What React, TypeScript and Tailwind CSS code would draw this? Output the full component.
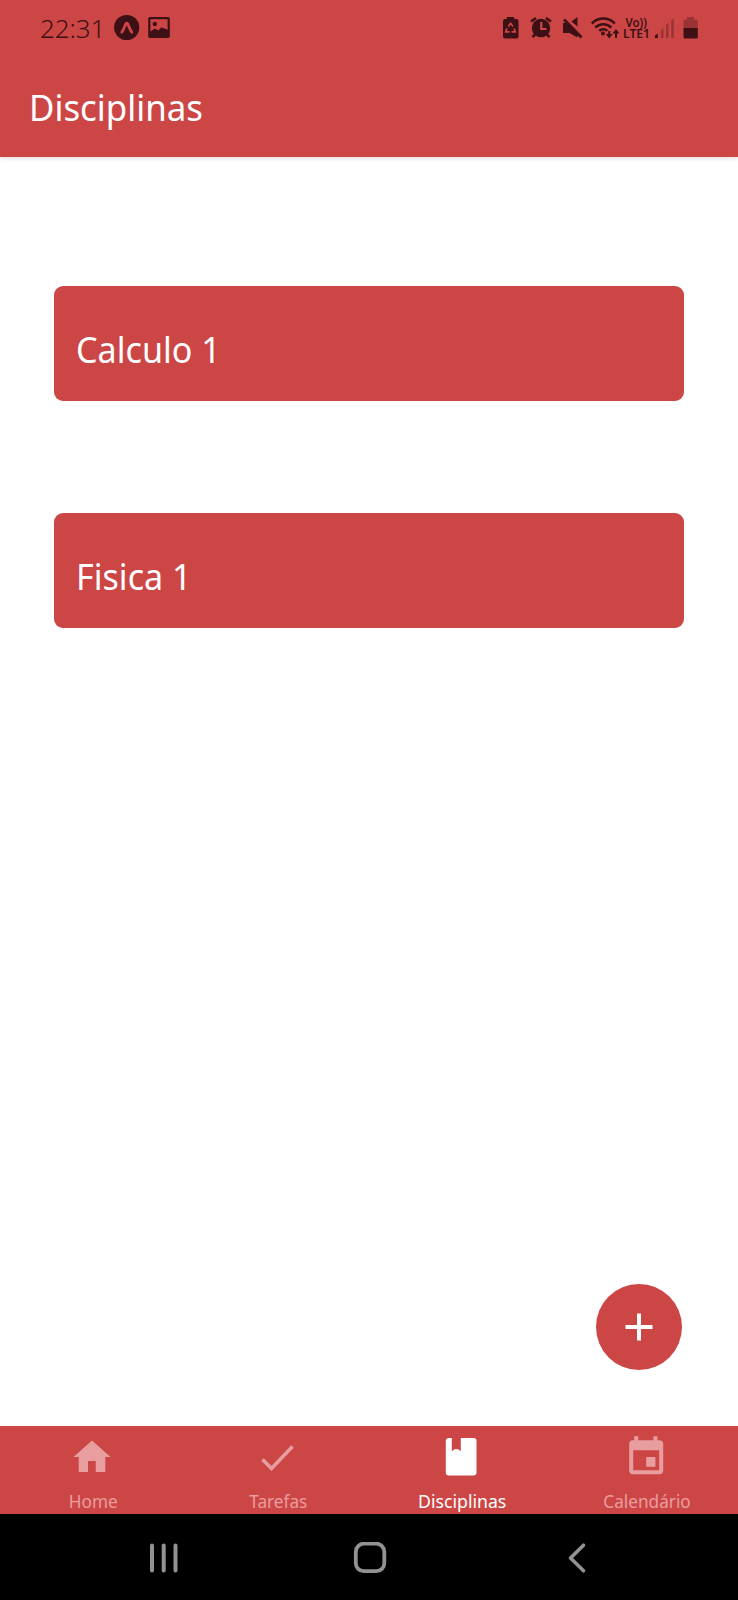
import type { ReactNode } from "react";

function StatusBar() {
  return (
    <div className="flex h-[56px] justify-between pl-10 pr-9 text-[#3d1015]">
      <div className="flex">
        <span className="mt-[9px] w-[66px] whitespace-nowrap text-[26px] font-light leading-[38px] tracking-[-0.1px]">22:31</span>
        <svg className="ml-[8px] mt-[14px]" width="57" height="28" viewBox="114 14 57 28" fill="currentColor">
          <circle cx="126.7" cy="27.5" r="12.6" />
          <path d="M121.8 32.200c2-2.600 3-6.500 4.100-8.400.5-.8 1.200-.8 1.700 0 1.100 1.900 2.200 5.800 4.200 8.400" fill="none" stroke="#cd4646" strokeWidth="2.800" strokeLinecap="round" />
          <path fillRule="evenodd" d="M150 17h18a1.800 1.800 0 0 1 1.800 1.800v17.400a1.800 1.800 0 0 1-1.800 1.800h-18a1.800 1.800 0 0 1-1.800-1.800V18.800A1.800 1.800 0 0 1 150 17Zm.4 2.200v12.300l4.600-3 3.200 2 3-3 2.200.5 4.200 1.800V19.200Z" />
          <circle cx="154.800" cy="24" r="2.200" />
        </svg>
      </div>
      <svg className="mt-[12px]" width="202" height="32" viewBox="500 12 202 32" fill="currentColor">
        <path d="M506.800 17h7.400v2h2.300q2 0 2 2v15.500q0 2-2 2h-11.500q-2 0-2-2V21q0-2 2-2h1.800Z" />
        <path d="m508.200 26.500 2.400-3.200 2.400 3.200M514.200 28.500l1 3.300h-3.700M509.500 31.800h-3.800l1.200-3.600" fill="none" stroke="#cd4646" strokeWidth="1.700" />
        <circle cx="541" cy="28" r="9.200" />
        <path d="m531 21.500 5-3.500M551 21.500l-5-3.500M535.500 34l-3 3.200M546.500 34l3 3.200" stroke="currentColor" strokeWidth="2.600" />
        <path d="M541.300 22v7h5.200" fill="none" stroke="#cd4646" strokeWidth="2.200" />
        <path d="M563 23h4l10.500 10.500v4L569.500 33H563ZM571.500 21.500l6-4.500v9.500Z" />
        <path d="m564 19.500 17.500 18" stroke="currentColor" strokeWidth="2.800" />
        <g fill="none" stroke="currentColor" strokeWidth="2.500">
          <path d="M591.800 23.500c6.500-6.600 16.500-6.600 23 0M595.300 27.500c4.500-4.500 11.500-4.500 16 0M599.300 30.800c2.200-2.200 5.800-2.200 8 0" />
        </g>
        <circle cx="603" cy="33.500" r="2" />
        <path d="M609.200 31v5M616 38v-6" stroke="currentColor" strokeWidth="2" />
        <path d="m605.800 34 3.400 4.500 3.400-4.500ZM612.600 33.500l3.400-4.500 3.400 4.500Z" />
        <text x="625.500" y="26.500" className="text-[12.5px] font-semibold" textLength="21.500" lengthAdjust="spacingAndGlyphs">Vo))</text>
        <text x="623" y="38.200" className="text-[12.5px] font-semibold" textLength="27" lengthAdjust="spacingAndGlyphs">LTE1</text>
        <path d="m655 35.500 2.800-2v4.500H655Z" />
        <path d="M661 30l2.500-2v10H661ZM666 25l2.500-2v15H666ZM671.300 20.500l2.500-2V38h-2.500Z" opacity=".35" />
        <path d="M683.500 28v-7q0-1.500 1.500-1.500h2V17h7v2.500h2.300q1.500 0 1.500 1.500v7Z" opacity=".35" />
        <path d="M683.500 28h14.300v9q0 1.500-1.500 1.500H685q-1.500 0-1.500-1.500Z" />
      </svg>
    </div>
  );
}

function SubjectCard({ name }: { name: string }) {
  return (
    <div className="flex h-[115px] items-center rounded-[9px] bg-[#cd4646] pl-[22px] pt-[10px]">
      <span className="origin-left scale-x-[0.935] whitespace-nowrap text-[36.5px] leading-[48px] text-white">{name}</span>
    </div>
  );
}

function Tab({ label, active, children }: { label: string; active?: boolean; children: ReactNode }) {
  return (
    <div className={`flex flex-1 flex-col items-center pt-[10px] ${active ? "text-white" : "text-[#e89d9f]"}`}>
      <svg width="40" height="40" viewBox="0 0 40 40" fill="currentColor">{children}</svg>
      <span className={`ml-[2px] mt-[12px] whitespace-nowrap text-[18.5px] leading-[26px] ${active ? "scale-x-[0.955]" : "scale-x-[0.93]"}`}>{label}</span>
    </div>
  );
}

export default function App() {
  return (
    <div className="flex h-[1600px] w-[738px] flex-col overflow-hidden bg-white font-['Noto_Sans',sans-serif]">
      <header className="z-10 h-[157px] shrink-0 bg-[#cd4646] shadow-[0_1px_5px_rgba(0,0,0,0.15)]">
        <StatusBar />
        <h1 className="ml-[29px] mt-[28px] w-fit origin-left scale-x-[0.968] whitespace-nowrap text-[36px] leading-[48px] text-white">Disciplinas</h1>
      </header>

      <main className="flex flex-1 flex-col px-[54px] pt-[129px]">
        <div className="flex flex-col gap-[112px]">
          <SubjectCard name="Calculo 1" />
          <SubjectCard name="Fisica 1" />
        </div>
        <button aria-label="Adicionar" className="mb-[56px] mr-[2px] mt-auto flex size-[86px] items-center justify-center self-end rounded-full bg-[#cd4646]">
          <svg width="28" height="28" viewBox="0 0 28 28" stroke="white" strokeWidth="4"><path d="M.5 14h27M14 .5v27" /></svg>
        </button>
      </main>

      <nav className="flex h-[88px] shrink-0 bg-[#cd4646]">
        <Tab label="Home">
          <path d="M20 4.500 38.500 21h-5.200v15h-9.600V25H16v11H6.700V21H1.500Z" />
        </Tab>
        <Tab label="Tarefas">
          <path d="m5.500 23.500 9 9L35.500 10.500" fill="none" stroke="currentColor" strokeWidth="3.600" />
        </Tab>
        <Tab label="Disciplinas" active>
          <path d="M8 2h2.800v13.200q4.500-4.500 9 0V2h12.700q3 0 3 3v31.500q0 3-3 3H7.800q-3 0-3-3V5q0-3 3.200-3Z" />
        </Tab>
        <Tab label="Calendário">
          <path fillRule="evenodd" d="M8.200 0h4v4h15.200V0h4v4h2.100q3.700 0 3.700 3.700v26.600q0 3.700-3.700 3.700H6.900q-3.700 0-3.700-3.700V7.700Q3.200 4 6.900 4h1.300ZM7.200 14v20h26V14Z" transform="translate(0 .2)" />
          <path d="M20.200 21h9.200v9.800h-9.200Z" />
        </Tab>
      </nav>

      <div className="flex h-[86px] shrink-0 items-start justify-between bg-black pl-[147px] pr-[145px] pt-[28px]">
        <svg width="32" height="32" viewBox="0 0 32 32" stroke="#929292" strokeWidth="4" strokeLinecap="round"><path d="M5 3.500v25M16.700 3.500v25M28.500 3.500v25" /></svg>
        <svg width="34" height="32" viewBox="0 0 34 32" fill="none" stroke="#929292" strokeWidth="3.800"><rect x="2.800" y="1.700" width="28.500" height="27.500" rx="8" /></svg>
        <svg width="32" height="32" viewBox="0 0 32 32" fill="none" stroke="#929292" strokeWidth="3.600" strokeLinecap="round" strokeLinejoin="round"><path d="M22.500 3.200 9.500 16l13 12.800" /></svg>
      </div>
    </div>
  );
}
